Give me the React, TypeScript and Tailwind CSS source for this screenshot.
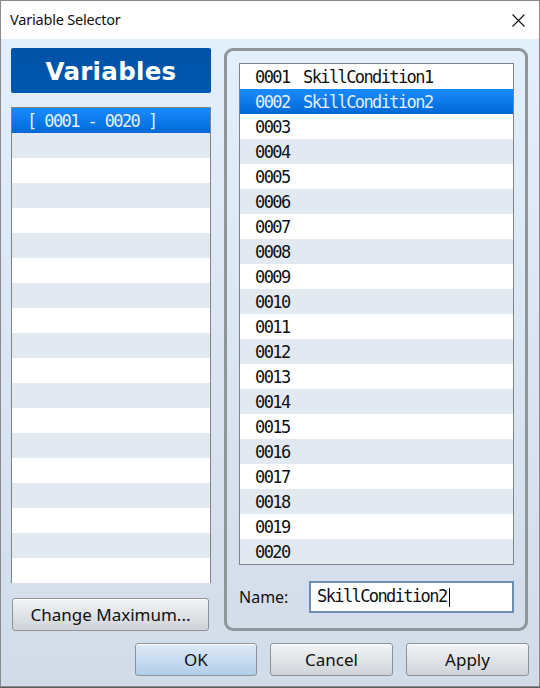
import React from "react";

const mono = { fontFamily: '"DejaVu Sans Mono", "Liberation Mono", monospace' };
const ui = { fontFamily: '"Noto Sans", "Open Sans", sans-serif' };

const names: Record<number, string> = { 1: "SkillCondition1", 2: "SkillCondition2" };

function Btn({ label, primary, className }: { label: string; primary?: boolean; className?: string }) {
  return (
    <button
      style={ui}
      className={
        "flex items-center justify-center rounded-[3px] border border-[#8d9298] text-[17px] text-[#111] shadow-[inset_0_1px_0_#ffffff] " +
        (primary
          ? "bg-gradient-to-b from-[#dfeaf6] to-[#b2cde8] "
          : "bg-gradient-to-b from-[#f3f4f6] to-[#cfd3d8] ") +
        (className ?? "")
      }
    >
      {label}
    </button>
  );
}

export default function App() {
  const leftRows = Array.from({ length: 19 }, (_, i) => i);
  const varRows = Array.from({ length: 20 }, (_, i) => i + 1);

  return (
    <div className="w-[540px] h-[688px] bg-[#5c5c5c]">
      <div className="w-[540px] h-[687px] border border-[#8a8a8a] flex flex-col bg-white">
        {/* title bar */}
        <div className="h-[38px] flex items-center justify-between pl-[9px] pr-[14px] bg-white">
          <span style={ui} className="text-[14.5px] text-[#111] tracking-[-0.2px]">
            Variable Selector
          </span>
          <svg width="13" height="13" viewBox="0 0 13 13" className="mt-[1px]">
            <path d="M0.5 0.5 L12.5 12.5 M12.5 0.5 L0.5 12.5" stroke="#111" strokeWidth="1.1" />
          </svg>
        </div>

        {/* dialog body */}
        <div className="flex-1 flex flex-col bg-gradient-to-b from-[#e4effc] to-[#d1dce8] pl-[10px] pr-[10px] pt-[9px]">
          <div className="flex gap-[13px]">
            {/* left column */}
            <div className="w-[200px] flex flex-col">
              <div className="h-[45px] rounded-[2px] bg-gradient-to-b from-[#0052a6] to-[#0058b0] flex items-center justify-center pt-[3px]">
                <span
                  style={{ fontFamily: '"DejaVu Sans", "Liberation Sans", sans-serif' }}
                  className="text-white font-bold text-[24.5px] leading-none tracking-[0.3px]"
                >
                  Variables
                </span>
              </div>
              <div className="mt-[14px] h-[476px] border border-[#7d838a] bg-white flex flex-col">
                {leftRows.map((i) => (
                  <div
                    key={i}
                    className={
                      "h-[25px] shrink-0 flex items-center pl-[15px] pt-[2px] " +
                      (i === 0
                        ? "bg-gradient-to-b from-[#1a8cff] to-[#0068d6]"
                        : i % 2 === 1
                        ? "bg-[#e3e9f0]"
                        : "bg-white")
                    }
                  >
                    {i === 0 && (
                      <span style={mono} className="text-[17px] tracking-[-1.6px] text-[#e2f0ff] whitespace-pre">
                        [ 0001 - 0020 ]
                      </span>
                    )}
                  </div>
                ))}
              </div>
              <Btn label="Change Maximum..." className="mt-[15px] ml-[1px] w-[197px] h-[33px]" />
            </div>

            {/* right group box */}
            <div className="w-[304px] h-[583px] rounded-[9px] border-[3px] border-[#8f959c] flex flex-col pl-[12px] pt-[12px]">
              <div className="w-[275px] h-[502px] border border-[#7d838a] bg-white flex flex-col">
                {varRows.map((n) => {
                  const sel = n === 2;
                  return (
                    <div
                      key={n}
                      className={
                        "h-[25px] shrink-0 flex items-center pt-[2px] " +
                        (sel
                          ? "bg-gradient-to-b from-[#1a8cff] to-[#0068d6] text-[#e2f0ff]"
                          : n % 2 === 0
                          ? "bg-[#e3e9f0] text-[#111]"
                          : "bg-white text-[#111]")
                      }
                    >
                      <span style={mono} className="w-[63px] pl-[15px] text-[17px] tracking-[-1.6px]">
                        {String(n).padStart(4, "0")}
                      </span>
                      <span style={mono} className="text-[17px] tracking-[-1.6px]">
                        {names[n] ?? ""}
                      </span>
                    </div>
                  );
                })}
              </div>
              <div className="mt-[16px] flex items-center">
                <span style={ui} className="w-[70px] text-[16px] text-[#111]">
                  Name:
                </span>
                <div className="w-[205px] h-[32px] border-2 border-[#6f8db3] bg-white flex items-center pl-[6px]">
                  <span style={mono} className="text-[17px] tracking-[-1.6px] text-[#111]">
                    SkillCondition2
                  </span>
                  <span className="w-[1px] h-[19px] bg-black ml-[2px]" />
                </div>
              </div>
            </div>
          </div>

          {/* dialog buttons */}
          <div className="mt-[12px] flex justify-end gap-[13px] pr-[0px]">
            <Btn label="OK" primary className="w-[122px] h-[33px]" />
            <Btn label="Cancel" className="w-[123px] h-[33px]" />
            <Btn label="Apply" className="w-[123px] h-[33px]" />
          </div>
        </div>
      </div>
    </div>
  );
}
